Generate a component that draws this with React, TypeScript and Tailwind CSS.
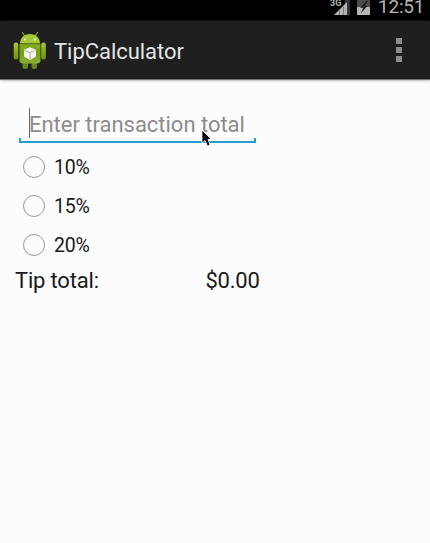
import React from 'react';

function StatusBar() {
  return (
    <div className="flex h-[21px] items-start justify-end bg-black pr-[4px]">
      <svg width="46" height="21" viewBox="0 0 46 21" className="mr-[4px] shrink-0">
        <path d="M17 0h5v15h-5z" fill="#343434" />
        <path d="M6 15L19 2V15Z" fill="#b4b4b4" />
        <path d="M11.500 10.500v4.500M15.500 6.500v8.500" stroke="#666" strokeWidth="0.800" />
        <text x="2" y="5.500" fontSize="9" fontWeight="700" fontFamily="Roboto" fill="#b5b5b5">3G</text>
        <path d="M29 0H42V15H29Z" fill="#4b4b4b" />
        <path d="M29 7H42V15H29Z" fill="#b6b6b6" />
        <path d="M38.500 1L32 7.800H35.300L32.800 13.500L39.500 5.800H36.500L40 1Z" fill="#1c1c1c" />
      </svg>
      <span className="mt-[-4px] w-[48px] whitespace-nowrap text-[19px] leading-[22px] tracking-[-0.2px] text-[#b4b4b4]">12:51</span>
    </div>
  );
}

function AndroidIcon() {
  return (
    <svg width="34" height="40" viewBox="0 0 34 40" className="shrink-0">
      <defs>
        <linearGradient id="green" x1="0" y1="0" x2="0" y2="1">
          <stop offset="0" stopColor="#a3c832" />
          <stop offset="1" stopColor="#6a9210" />
        </linearGradient>
        <linearGradient id="torso" x1="0" y1="0" x2="0" y2="1">
          <stop offset="0" stopColor="#83ac1c" />
          <stop offset="0.500" stopColor="#75a010" />
          <stop offset="1" stopColor="#8caf38" />
        </linearGradient>
      </defs>
      <path d="M11.500 6L9.500 2.500M22.500 6L24.500 2.500" stroke="#7b9a2d" strokeWidth="1.300" strokeLinecap="round" />
      <rect x="9.500" y="29" width="5.500" height="10" rx="2.500" fill="#64861c" />
      <rect x="18.500" y="29" width="5.500" height="10" rx="2.500" fill="#64861c" />
      <rect x="0.700" y="12.500" width="4.600" height="17" rx="2" fill="url(#green)" />
      <rect x="28.200" y="12.500" width="4.600" height="17" rx="2" fill="url(#green)" />
      <path d="M7 13.500C7 8 11 4 17 4S27 8 27 13.500Z" fill="#a5c936" />
      <path d="M6.500 14H27.500V30.500Q27.500 33.500 24 33.500H10Q6.500 33.500 6.500 30.500Z" fill="url(#torso)" />
      <path d="M7 14H27" stroke="#638519" strokeWidth="0.800" />
      <circle cx="12" cy="9.500" r="1" fill="#f5f9e8" />
      <circle cx="22" cy="9.500" r="1" fill="#f5f9e8" />
      <path d="M17 17.300L23 19.800V26.500L17 30L11 26.500V19.800Z" fill="#f5f5f2" />
      <path d="M11.500 20.300L17 22.700L22.500 20.300M17 22.700V29.500" fill="none" stroke="#a4ad90" strokeWidth="0.900" />
    </svg>
  );
}

function ActionBar() {
  return (
    <header className="flex h-[59px] items-center border-b border-[#777] bg-[#1f1f1f] pl-[13px] pr-[28px] shadow-[0_1px_2px_#bbb]">
      <AndroidIcon />
      <h1 className="ml-[7px] pt-[3px] text-[22px] leading-[30px] tracking-[-0.04px] text-[#e4e4e4]">TipCalculator</h1>
      <div className="ml-auto flex flex-col gap-[3px]">
        <i className="h-[6px] w-[6px] bg-[#8d8d8f]" />
        <i className="h-[6px] w-[6px] bg-[#8d8d8f]" />
        <i className="h-[6px] w-[6px] bg-[#8d8d8f]" />
      </div>
    </header>
  );
}

function Option({ label }: { label: string }) {
  return (
    <label className="flex h-[39px] items-center pl-[23px]">
      <span className="h-[22px] w-[22px] rounded-full border border-[#999]" />
      <span className="ml-[9px] pt-[3px] text-[19.500px] leading-[24px] tracking-[-0.2px]">{label}</span>
    </label>
  );
}

export default function App() {
  return (
    <div className="h-[543px] w-[430px] overflow-hidden bg-[#fcfcfc] font-['Roboto',sans-serif] text-[#191919]">
      <StatusBar />
      <ActionBar />
      <main className="pt-[26px]">
        <div className="relative ml-[19px] h-[38px] w-[237px]">
          <div className="flex h-[32px] items-center pl-[10px]">
            <span className="mt-[2px] h-[30px] w-px shrink-0 bg-[#666]" />
            <span className="ml-[-1px] whitespace-nowrap pt-[4px] text-[22px] leading-[27px] tracking-[-0.02px] text-[#8c8c8c]">Enter transaction total</span>
          </div>
          <div className="h-[5px] border-x-2 border-b-2 border-[#249fce]" />
          <svg width="12" height="19" viewBox="0 0 12 19" className="absolute left-[182px] top-[23px]">
            <path d="M1 1V14L4 11.500L6.500 17L9 16L7 10.500H10.500Z" fill="#000" stroke="#fff" strokeWidth="0.800" />
          </svg>
        </div>
        <div className="mt-[3px]">
          <Option label="10%" />
          <Option label="15%" />
          <Option label="20%" />
        </div>
        <div className="flex h-[32px] items-center pl-[15px] text-[22px] tracking-[-0.18px]">
          <span className="w-[190.500px]">Tip total:</span>
          <span className="tracking-[-0.25px]">$0.00</span>
        </div>
      </main>
    </div>
  );
}
